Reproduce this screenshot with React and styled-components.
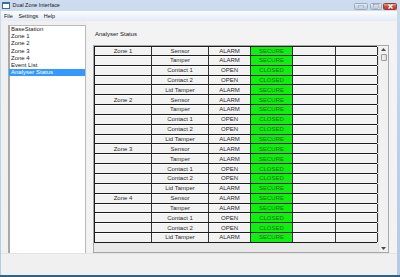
import React from "react";
import styled, { createGlobalStyle } from "styled-components";

const Global = createGlobalStyle`
  html, body { margin: 0; padding: 0; background: #ffffff; }
  body { font-family: "Liberation Sans", Arial, sans-serif; }
  * { box-sizing: border-box; }
`;

const Window = styled.div`
  width: 400px;
  height: 277px;
  display: flex;
  flex-direction: column;
  background: linear-gradient(180deg, #cddcee 0%, #bed3ea 40%, #b4cbe4 100%);
  border-bottom: 2px solid #2e6386;
  overflow: hidden;
`;

const TitleBar = styled.div`
  height: 11px;
  flex: none;
  display: flex;
  align-items: center;
  padding-left: 2px;
  gap: 2px;
`;

const AppIcon = styled.div`
  width: 8px;
  height: 7px;
  border: 1px solid #3d6d9e;
  border-top-width: 2px;
  background: #ffffff;
  flex: none;
`;

const Title = styled.span`
  font-size: 5.4px;
  color: #1a1a1a;
  flex: 1;
  line-height: 7px;
  margin-left: 0.5px;
`;

const Controls = styled.div`
  display: flex;
  gap: 1.5px;
  margin-right: 3px;
  align-self: flex-start;
  margin-top: 2.5px;
`;

const CtrlButton = styled.div`
  width: ${(p) => p.$w}px;
  height: 7px;
  border: 1px solid ${(p) => (p.$close ? "#9c3a2e" : "#98abc2")};
  border-radius: 1.5px;
  background: ${(p) =>
    p.$close
      ? "linear-gradient(180deg, #e59a8e 0%, #c8483a 55%, #c0392c 100%)"
      : "linear-gradient(180deg, #e3ebf5 0%, #c9d6e6 55%, #bccbde 100%)"};
  display: flex;
  align-items: center;
  justify-content: center;
`;

const Body = styled.div`
  flex: 1;
  display: flex;
  flex-direction: column;
  margin: 0 3px 0 1px;
  min-height: 0;
`;

const MenuBar = styled.div`
  height: 10px;
  flex: none;
  display: flex;
  align-items: center;
  gap: 5.5px;
  padding-left: 3px;
  background: linear-gradient(180deg, #fbfcfe 0%, #edf2f9 60%, #e1eaf6 100%);
`;

const MenuItem = styled.span`
  font-size: 5.5px;
  color: #111;
  line-height: 7px;
`;

const Client = styled.div`
  flex: 1;
  display: flex;
  flex-direction: column;
  background: #f0f0f0;
  min-height: 0;
`;

const Main = styled.div`
  height: 233px;
  flex: none;
  display: flex;
  padding-left: 7px;
  gap: 1px;
  border-bottom: 1px solid #e3e3e3;
`;

const ListBox = styled.div`
  width: 78px;
  margin-top: 4px;
  background: #ffffff;
  border: 1px solid #b9b9b9;
  border-left: 2px solid #a9a9a9;
  border-bottom: none;
  display: flex;
  flex-direction: column;
`;

const ListItem = styled.div`
  height: 7.2px;
  font-size: 6px;
  line-height: 7.2px;
  margin-left: ${(p) => (p.$selected ? "-1px" : "0")};
  padding-left: ${(p) => (p.$selected ? "2px" : "1px")};
  color: ${(p) => (p.$selected ? "#ffffff" : "#1a1a1a")};
  background: ${(p) => (p.$selected ? "#3399ff" : "transparent")};
  white-space: nowrap;
`;

const RightPanel = styled.div`
  flex: 1;
  display: flex;
  flex-direction: column;
  padding: 9.5px 8px 0 6px;
  background: #f3f3f3;
`;

const PanelLabel = styled.div`
  font-size: 6px;
  line-height: 7px;
  color: #1a1a1a;
  margin-left: 2px;
  height: 7px;
`;

const GridFrame = styled.div`
  margin-top: 7.5px;
  height: 207.5px;
  border: 1px solid #a7a7a7;
  background: #e9e9e9;
  display: flex;
`;

const Grid = styled.div`
  width: 283px;
  display: flex;
  flex-direction: column;
`;

const Row = styled.div`
  height: 9.85px;
  flex: none;
  display: grid;
  grid-template-columns: 57px 57px 42px 42px 43px 42px;
  border-top: ${(p) => (p.$first ? "1px solid #1c1c1c" : "none")};
  border-bottom: 1px solid #1c1c1c;
  border-left: 1px solid #1c1c1c;
`;

const Cell = styled.div`
  border-right: 1.5px solid #333333;
  background: ${(p) => (p.$ok ? "#12ee12" : "#f2f2f2")};
  color: ${(p) => (p.$ok ? "#1f6e18" : "#2e2e2e")};
  font-size: 6px;
  display: flex;
  align-items: center;
  justify-content: center;
  white-space: nowrap;
  overflow: hidden;
  box-shadow: ${(p) => (p.$ok ? "none" : "inset 0 1px 0 #fcfcfc")};
`;

const ScrollBar = styled.div`
  width: 10px;
  margin-left: 1px;
  display: flex;
  flex-direction: column;
  align-items: center;
  background: #f1f1f1;
  border-left: 1px solid #e2e2e2;
`;

const ScrollArrow = styled.div`
  height: 7px;
  width: 100%;
  display: flex;
  align-items: center;
  justify-content: center;
`;

const Thumb = styled.div`
  width: 6px;
  height: 7px;
  margin-top: 1px;
  border: 1px solid #9a9a9a;
  border-radius: 1px;
  background: linear-gradient(90deg, #f2f2f2, #dcdcdc);
`;

const Track = styled.div`
  flex: 1;
`;

const StatusStrip = styled.div`
  flex: 1;
  background: #f0f0f0;
`;

const zones = [1, 2, 3, 4];
const parts = [
  ["Sensor", "ALARM", "SECURE"],
  ["Tamper", "ALARM", "SECURE"],
  ["Contact 1", "OPEN", "CLOSED"],
  ["Contact 2", "OPEN", "CLOSED"],
  ["Lid Tamper", "ALARM", "SECURE"],
];

const listItems = [
  "BaseStation",
  "Zone 1",
  "Zone 2",
  "Zone 3",
  "Zone 4",
  "Event List",
  "Analyser Status",
];

const Triangle = ({ up }) => (
  <svg width="5" height="3" viewBox="0 0 5 3">
    <path d={up ? "M0 3 L2.5 0 L5 3 Z" : "M0 0 L2.5 3 L5 0 Z"} fill="#4a4a4a" />
  </svg>
);

export default function App() {
  return (
    <>
      <Global />
      <Window>
        <TitleBar>
          <AppIcon />
          <Title>Dual Zone Interface</Title>
          <Controls>
            <CtrlButton $w={14}>
              <svg width="6" height="3" viewBox="0 0 6 3">
                <rect x="0" y="1" width="6" height="2" fill="#ffffff" stroke="#4a5d75" strokeWidth="0.5" />
              </svg>
            </CtrlButton>
            <CtrlButton $w={12}>
              <svg width="6" height="5" viewBox="0 0 6 5">
                <rect x="0.5" y="0.5" width="5" height="4" fill="none" stroke="#ffffff" strokeWidth="1" />
                <rect x="0.25" y="0.25" width="5.5" height="4.5" fill="none" stroke="#4a5d75" strokeWidth="0.4" />
              </svg>
            </CtrlButton>
            <CtrlButton $w={14} $close>
              <svg width="5" height="5" viewBox="0 0 5 5">
                <path d="M0.5 0.5 L4.5 4.5 M4.5 0.5 L0.5 4.5" stroke="#ffffff" strokeWidth="1.3" />
              </svg>
            </CtrlButton>
          </Controls>
        </TitleBar>
        <Body>
          <MenuBar>
            <MenuItem>File</MenuItem>
            <MenuItem>Settings</MenuItem>
            <MenuItem>Help</MenuItem>
          </MenuBar>
          <Client>
            <Main>
              <ListBox>
                {listItems.map((it) => (
                  <ListItem key={it} $selected={it === "Analyser Status"}>
                    {it}
                  </ListItem>
                ))}
              </ListBox>
              <RightPanel>
                <PanelLabel>Analyser Status</PanelLabel>
                <GridFrame>
                  <Grid>
                    {zones.map((z) =>
                      parts.map((p, i) => (
                        <Row key={`${z}-${i}`} $first={z === 1 && i === 0}>
                          <Cell>{i === 0 ? `Zone ${z}` : ""}</Cell>
                          <Cell>{p[0]}</Cell>
                          <Cell>{p[1]}</Cell>
                          <Cell $ok>{p[2]}</Cell>
                          <Cell />
                          <Cell />
                        </Row>
                      ))
                    )}
                  </Grid>
                  <ScrollBar>
                    <ScrollArrow>
                      <Triangle up />
                    </ScrollArrow>
                    <Thumb />
                    <Track />
                    <ScrollArrow>
                      <Triangle />
                    </ScrollArrow>
                  </ScrollBar>
                </GridFrame>
              </RightPanel>
            </Main>
            <StatusStrip />
          </Client>
        </Body>
      </Window>
    </>
  );
}
